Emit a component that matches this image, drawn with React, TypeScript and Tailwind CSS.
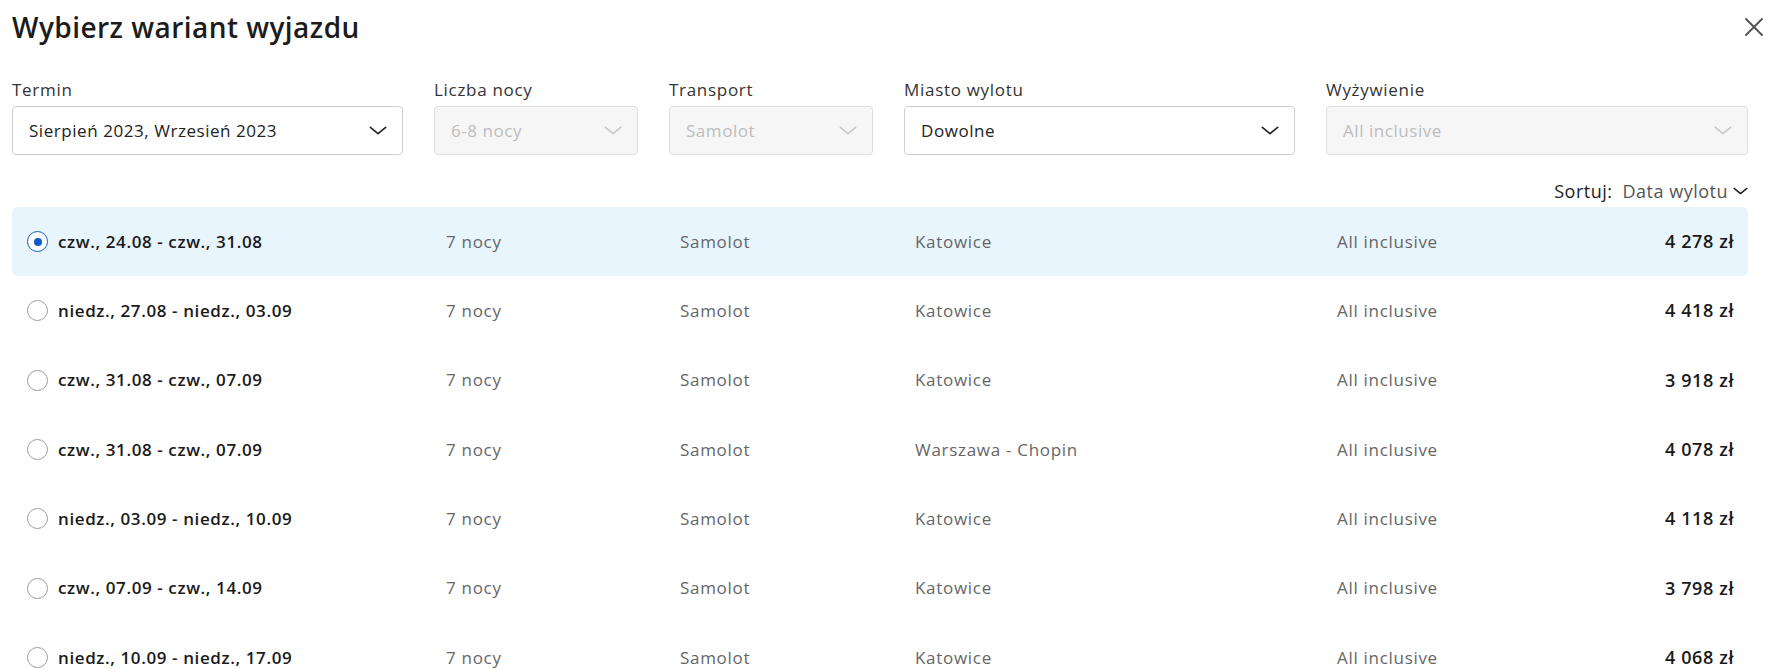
import { useState } from "react";

type Offer = {
  dates: string;
  nights: string;
  transport: string;
  city: string;
  board: string;
  price: string;
};

const offers: Offer[] = [
  { dates: "czw., 24.08 - czw., 31.08", nights: "7 nocy", transport: "Samolot", city: "Katowice", board: "All inclusive", price: "4 278 zł" },
  { dates: "niedz., 27.08 - niedz., 03.09", nights: "7 nocy", transport: "Samolot", city: "Katowice", board: "All inclusive", price: "4 418 zł" },
  { dates: "czw., 31.08 - czw., 07.09", nights: "7 nocy", transport: "Samolot", city: "Katowice", board: "All inclusive", price: "3 918 zł" },
  { dates: "czw., 31.08 - czw., 07.09", nights: "7 nocy", transport: "Samolot", city: "Warszawa - Chopin", board: "All inclusive", price: "4 078 zł" },
  { dates: "niedz., 03.09 - niedz., 10.09", nights: "7 nocy", transport: "Samolot", city: "Katowice", board: "All inclusive", price: "4 118 zł" },
  { dates: "czw., 07.09 - czw., 14.09", nights: "7 nocy", transport: "Samolot", city: "Katowice", board: "All inclusive", price: "3 798 zł" },
  { dates: "niedz., 10.09 - niedz., 17.09", nights: "7 nocy", transport: "Samolot", city: "Katowice", board: "All inclusive", price: "4 068 zł" },
];

const cols = "grid grid-cols-[391px_204px_204px_391px_1fr] gap-x-[31px]";

function Chevron({ className = "" }: { className?: string }) {
  return (
    <svg viewBox="0 0 20 10" className={className} fill="none" stroke="currentColor" strokeWidth="1.8" strokeLinecap="round" strokeLinejoin="round">
      <path d="M1.5 1.5 L10 8.5 L18.5 1.5" />
    </svg>
  );
}

function Select({ label, value, disabled }: { label: string; value: string; disabled?: boolean }) {
  return (
    <div className="flex flex-col">
      <span className="mb-[4px] h-[24px] text-[17px] leading-[24px] tracking-[0.7px] text-[#333]">{label}</span>
      <div
        className={
          disabled
            ? "flex h-[49px] items-center justify-between rounded-[4px] border border-[#dedede] bg-[#f6f6f6] pl-[16px] pr-[15px] text-[17px] tracking-[0.55px] text-[#bdbdbd]"
            : "flex h-[49px] items-center justify-between rounded-[4px] border border-[#cfcfcf] bg-white pl-[16px] pr-[15px] text-[17px] tracking-[0.55px] text-[#222]"
        }
      >
        <span>{value}</span>
        <Chevron className={disabled ? "h-[9px] w-[18px] text-[#c8c8c8]" : "h-[9px] w-[18px] text-[#222]"} />
      </div>
    </div>
  );
}

export default function App() {
  const [selected, setSelected] = useState(0);

  return (
    <div
      className="h-[669px] w-[1771px] overflow-hidden bg-white pl-[12px] pr-[23px] text-[#1a1a1a]"
      style={{ fontFamily: '"Open Sans", "Noto Sans", sans-serif' }}
    >
      {/* Header */}
      <div className="-mr-[16px] flex h-[54px] items-center justify-between">
        <h1 className="text-[28px] font-semibold tracking-[0.45px] text-[#1c1c1c]">Wybierz wariant wyjazdu</h1>
        <button type="button" aria-label="Zamknij" className="text-[#555]">
          <svg viewBox="0 0 20 20" className="h-[20px] w-[20px]" fill="none" stroke="currentColor" strokeWidth="2" strokeLinecap="round">
            <path d="M2 2 L18 18 M18 2 L2 18" />
          </svg>
        </button>
      </div>

      {/* Filters */}
      <div className={`${cols} mt-[24px]`}>
        <Select label="Termin" value="Sierpień 2023, Wrzesień 2023" />
        <Select label="Liczba nocy" value="6-8 nocy" disabled />
        <Select label="Transport" value="Samolot" disabled />
        <Select label="Miasto wylotu" value="Dowolne" />
        <Select label="Wyżywienie" value="All inclusive" disabled />
      </div>

      {/* Sort */}
      <div className="mt-[24px] flex h-[24px] items-center justify-end gap-[10px] text-[18px] tracking-[0.5px]">
        <span className="text-[#222]">Sortuj:</span>
        <span className="flex items-center gap-[5px] text-[#555]">
          Data wylotu
          <Chevron className="h-[8px] w-[15px] text-[#1a1a1a]" />
        </span>
      </div>

      {/* Offers */}
      <div className="mt-[4px] flex flex-col">
        {offers.map((o, i) => {
          const active = i === selected;
          return (
            <div
              key={i}
              onClick={() => setSelected(i)}
              className={`${cols} h-[69.3px] cursor-pointer items-center rounded-[6px] text-[17px] tracking-[0.7px] ${active ? "bg-[#e8f5fd]" : ""}`}
            >
              <div className="flex items-center gap-[10px] pl-[15px]">
                <span
                  className={`flex h-[21px] w-[21px] items-center justify-center rounded-full border ${active ? "border-[1.5px] border-[#0d5bc6]" : "border-[#9a9a9a]"} bg-white`}
                >
                  {active && <span className="h-[8px] w-[8px] rounded-full bg-[#0d5bc6]" />}
                </span>
                <span className="font-semibold tracking-[0.6px] text-[#1a1a1a]">{o.dates}</span>
              </div>
              <div className="pl-[12px] text-[#666]">{o.nights}</div>
              <div className="pl-[11px] text-[#666]">{o.transport}</div>
              <div className="pl-[11px] text-[#666]">{o.city}</div>
              <div className="flex items-center justify-between pl-[11px] pr-[14px]">
                <span className="text-[#666]">{o.board}</span>
                <span className="text-[18px] font-semibold tracking-[0.6px] text-[#1a1a1a]">{o.price}</span>
              </div>
            </div>
          );
        })}
      </div>
    </div>
  );
}
